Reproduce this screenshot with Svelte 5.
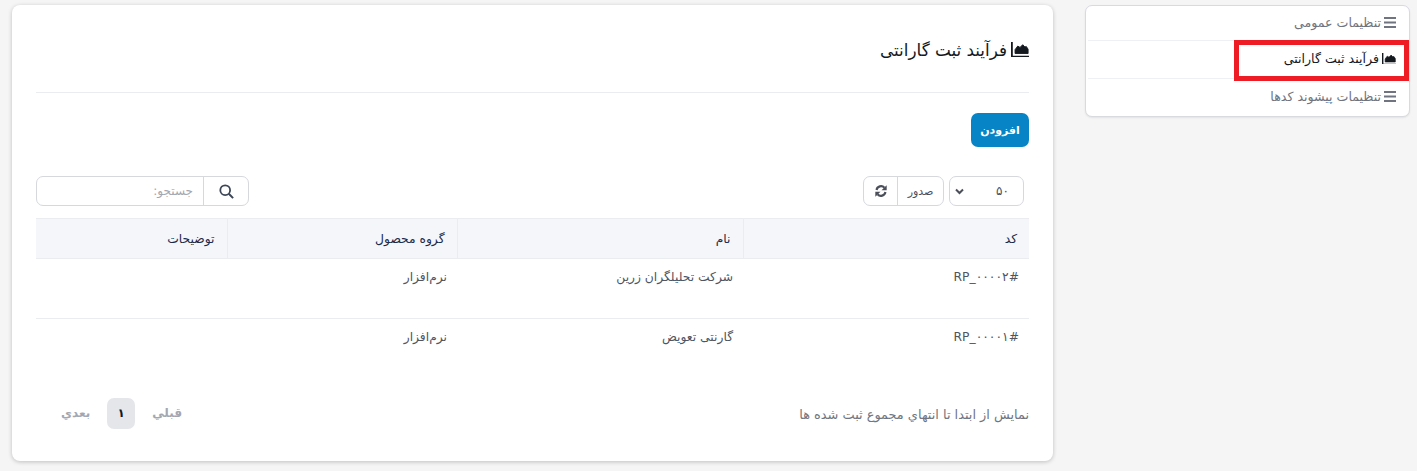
<script>
    const rows = [
        { code: '#RP_۰۰۰۰۲', name: 'شرکت تحلیلگران زرین', group: 'نرم‌افزار' },
        { code: '#RP_۰۰۰۰۱', name: 'گارنتی تعویض', group: 'نرم‌افزار' }
    ];
    const menu = [
        { label: 'تنظیمات عمومی', icon: 'bars' },
        { label: 'فرآیند ثبت گارانتی', icon: 'chart', active: true },
        { label: 'تنظیمات پیشوند کدها', icon: 'bars' }
    ];
</script>

{#snippet chart(size)}
    <svg class="ico" width={size} height={size * 0.85} viewBox="0 0 20 17">
        <path d="M0 0h2v15.200H20V17H0z" fill="currentColor" />
        <path d="M4.500 12.800V8.500L7.500 4.500l2.500 1.500L13 3l2.500 2.500 1.500-.5 2 3v4.800z" fill="currentColor" stroke="currentColor" stroke-linejoin="round" />
    </svg>
{/snippet}

{#snippet bars()}
    <svg class="ico" width="12" height="11" viewBox="0 0 12 11">
        <path d="M0 0h12v2H0zM0 4.500h12v2H0zM0 9h12v2H0z" fill="currentColor" />
    </svg>
{/snippet}

<div class="page" dir="rtl">
    <aside class="side">
        {#each menu as item}
            <div class="side-row" class:active={item.active}>
                {#if item.icon === 'bars'}
                    {@render bars()}
                {:else}
                    {@render chart(14)}
                {/if}
                <span>{item.label}</span>
                {#if item.active}<div class="mark"></div>{/if}
            </div>
        {/each}
    </aside>

    <main class="card">
        <div class="title-row">
            <h1>{@render chart(18)}<span>فرآیند ثبت گارانتی</span></h1>
        </div>

        <div class="add-row">
            <button class="add">افزودن</button>
        </div>

        <div class="tools">
            <div class="tools-start">
                <div class="select">
                    <span>۵۰</span>
                    <svg width="9" height="7" viewBox="0 0 9 7"><path d="M1 1.500l3.500 3.500L8 1.500" fill="none" stroke="currentColor" stroke-width="2" /></svg>
                </div>
                <div class="group">
                    <span class="group-btn export">صدور</span>
                    <span class="group-btn refresh">
                        <svg width="12" height="12" viewBox="0 0 14 14">
                            <path d="M1.800 5.800A5.300 5.300 0 0 1 11 3.200" fill="none" stroke="currentColor" stroke-width="2.500" />
                            <path d="M13.600 .2v6h-6z" fill="currentColor" />
                            <path d="M12.200 8.200A5.300 5.300 0 0 1 3 10.800" fill="none" stroke="currentColor" stroke-width="2.500" />
                            <path d="M.4 13.800v-6h6z" fill="currentColor" />
                        </svg>
                    </span>
                </div>
            </div>
            <div class="search">
                <span class="search-btn">
                    <svg width="15" height="15" viewBox="0 0 15 15">
                        <circle cx="6.200" cy="6.200" r="4.900" fill="none" stroke="currentColor" stroke-width="1.800" />
                        <path d="M9.800 9.800l4.300 4.300" stroke="currentColor" stroke-width="2" />
                    </svg>
                </span>
                <input placeholder="جستجو:" />
            </div>
        </div>

        <table>
            <thead>
                <tr>
                    <th class="c1">کد</th>
                    <th class="c2">نام</th>
                    <th class="c3">گروه محصول</th>
                    <th>توضیحات</th>
                </tr>
            </thead>
            <tbody>
                {#each rows as row}
                    <tr>
                        <td>{row.code}</td>
                        <td>{row.name}</td>
                        <td>{row.group}</td>
                        <td></td>
                    </tr>
                {/each}
            </tbody>
        </table>

        <div class="foot">
            <span class="info">نمایش از ابتدا تا انتهاي مجموع ثبت شده ها</span>
            <div class="pager">
                <span>قبلي</span>
                <span class="num">۱</span>
                <span>بعدي</span>
            </div>
        </div>
    </main>
</div>

<style>
    :global(body) {
        background: #f5f5f5;
        font-family: "DejaVu Sans", "Noto Sans", sans-serif;
    }

    .page {
        display: flex;
        align-items: flex-start;
        gap: 32px;
        padding: 5px 7px 0 12px;
        height: 466px;
        box-sizing: border-box;
        overflow: hidden;
    }

    .ico {
        flex: none;
    }

    .side {
        width: 325px;
        flex: none;
        box-sizing: border-box;
        background: #fff;
        border: 1px solid #d8dae0;
        border-radius: 7px;
        box-shadow: 0 1px 2px rgba(0, 0, 0, .08);
        padding: 0 2px;
    }

    .side-row {
        position: relative;
        height: 37px;
        display: flex;
        align-items: center;
        gap: 3px;
        padding: 0 11px 2px;
        box-sizing: content-box;
        height: 35px;
        font-size: 12.600px;
        color: #6f7480;
        border-top: 1px solid #eff0f3;
    }

    .side-row:first-child {
        height: 32px;
        border-top: 0;
    }

    .side-row.active {
        color: #14181f;
    }

    .mark {
        position: absolute;
        z-index: 1;
        top: -1px;
        right: -2px;
        width: 175px;
        height: 41px;
        box-sizing: border-box;
        border: 5px solid #ee1c25;
    }

    .card {
        flex: 1;
        min-width: 0;
        height: 456px;
        box-sizing: border-box;
        background: #fff;
        border-radius: 8px;
        box-shadow: 0 1px 4px rgba(0, 0, 0, .22);
        padding: 0 24px;
    }

    .title-row {
        height: 88px;
        box-sizing: border-box;
        padding-top: 2px;
        display: flex;
        align-items: center;
        border-bottom: 1px solid #ebecef;
    }

    h1 {
        margin: 0;
        display: flex;
        align-items: center;
        gap: 4px;
        font-size: 16.800px;
        font-weight: 400;
        color: #14181f;
    }

    .add-row {
        padding-top: 20px;
    }

    .add {
        width: 58px;
        height: 34px;
        border: 0;
        border-radius: 7px;
        background: #0684c6;
        color: #fff;
        font: 700 11px "DejaVu Sans", sans-serif;
        padding: 0;
        display: block;
    }

    .tools {
        display: flex;
        justify-content: space-between;
        align-items: center;
        margin-top: 29px;
        padding-right: 5px;
    }

    .tools-start {
        display: flex;
        gap: 5px;
    }

    .select,
    .group,
    .search {
        display: flex;
        height: 30px;
        box-sizing: border-box;
        border: 1px solid #d6d8de;
        border-radius: 7px;
        background: #fff;
        color: #4a4f5a;
        font-size: 11px;
    }

    .select {
        width: 75px;
        align-items: center;
        justify-content: space-between;
        padding: 0 14px 0 5px;
        font-size: 12px;
    }

    .group-btn {
        display: flex;
        align-items: center;
        justify-content: center;
    }

    .export {
        width: 45px;
    }

    .refresh {
        width: 33px;
        border-right: 1px solid #d6d8de;
    }

    .search {
        width: 213px;
    }

    .search-btn {
        width: 44px;
        display: flex;
        align-items: center;
        justify-content: center;
        color: #3c4656;
        flex: none;
    }

    input {
        flex: 1;
        min-width: 0;
        border: 0;
        border-right: 1px solid #d6d8de;
        background: transparent;
        outline: 0;
        padding: 0 10px;
        font: 12px "DejaVu Sans", sans-serif;
    }

    input::placeholder {
        color: #a3a7b0;
    }

    table {
        width: 100%;
        table-layout: fixed;
        border-collapse: collapse;
        margin-top: 12px;
        font-size: 12.300px;
    }

    th {
        height: 40px;
        box-sizing: border-box;
        padding: 0 12px;
        background: #f5f6f9;
        border-top: 1px solid #ebecef;
        border-bottom: 1px solid #ebecef;
        border-left: 1px solid #ebecef;
        text-align: right;
        font-weight: 400;
        color: #1c2b4a;
    }

    th:last-child {
        border-left: 0;
    }

    .c1 {
        width: 286px;
    }

    .c2 {
        width: 286px;
    }

    .c3 {
        width: 230px;
    }

    td {
        height: 60px;
        padding: 11px 10px 0;
        box-sizing: border-box;
        vertical-align: top;
        color: #50555f;
        border-bottom: 1px solid #ebecef;
    }

    tbody tr:last-child td {
        border-bottom: 0;
    }

    .foot {
        display: flex;
        justify-content: space-between;
        align-items: center;
        margin-top: 19px;
    }

    .info {
        padding-top: 3px;
        font-size: 12.900px;
        color: #70757f;
    }

    .pager {
        display: flex;
        align-items: center;
        gap: 17px;
        padding-left: 25px;
        font-size: 12px;
        font-weight: 700;
        color: #a3a7b2;
    }

    .num {
        width: 28px;
        height: 31px;
        display: flex;
        align-items: center;
        justify-content: center;
        border-radius: 7px;
        background: #e4e6ea;
        color: #14181f;
    }
</style>
